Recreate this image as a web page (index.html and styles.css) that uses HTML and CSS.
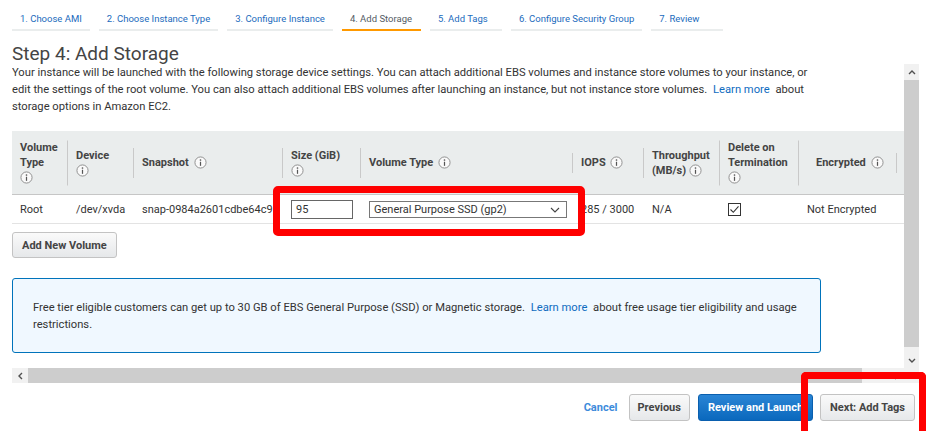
FILE: index.html
```html
<!DOCTYPE html>
<html lang="en">
<head>
  <meta charset="UTF-8">
  <title>Launch instance wizard - Add Storage</title>
  <link rel="stylesheet" href="styles.css">
</head>
<body>
  <ul class="tabs">
    <li><a href="#">1. Choose AMI</a></li>
    <li><a href="#">2. Choose Instance Type</a></li>
    <li><a href="#">3. Configure Instance</a></li>
    <li class="active"><a href="#">4. Add Storage</a></li>
    <li><a href="#">5. Add Tags</a></li>
    <li><a href="#">6. Configure Security Group</a></li>
    <li><a href="#">7. Review</a></li>
  </ul>

  <h1 class="title">Step 4: Add Storage</h1>

  <div class="frame">
    <div class="viewport">
      <p class="intro">Your instance will be launched with the following storage device settings. You can attach additional EBS volumes and instance store volumes to your instance, or edit the settings of the root volume. You can also attach additional EBS volumes after launching an instance, but not instance store volumes. <a href="#">Learn more</a> about storage options in Amazon EC2.</p>

      <table class="volumes">
        <colgroup>
          <col style="width:56px"><col style="width:66px"><col style="width:149px"><col style="width:78px"><col style="width:212px">
          <col style="width:71px"><col style="width:76px"><col style="width:79px"><col style="width:98px"><col style="width:40px">
        </colgroup>
        <thead>
          <tr>
            <th class="sep3">Volume<br>Type<br><svg class="info" viewBox="0 0 14 14"><circle cx="7" cy="7" r="6" fill="#fafafa" stroke="#8a8a8a"/><circle cx="7" cy="4.3" r="0.9" fill="#555"/><path d="M7 6.2v4.4" stroke="#555" stroke-width="1.3"/></svg></th>
            <th class="sep2">Device<br><svg class="info" viewBox="0 0 14 14"><circle cx="7" cy="7" r="6" fill="#fafafa" stroke="#8a8a8a"/><circle cx="7" cy="4.3" r="0.9" fill="#555"/><path d="M7 6.2v4.4" stroke="#555" stroke-width="1.3"/></svg></th>
            <th class="sep2">Snapshot <svg class="info" viewBox="0 0 14 14"><circle cx="7" cy="7" r="6" fill="#fafafa" stroke="#8a8a8a"/><circle cx="7" cy="4.3" r="0.9" fill="#555"/><path d="M7 6.2v4.4" stroke="#555" stroke-width="1.3"/></svg></th>
            <th class="sep2">Size (GiB)<br><svg class="info" viewBox="0 0 14 14"><circle cx="7" cy="7" r="6" fill="#fafafa" stroke="#8a8a8a"/><circle cx="7" cy="4.3" r="0.9" fill="#555"/><path d="M7 6.2v4.4" stroke="#555" stroke-width="1.3"/></svg></th>
            <th class="sep1">Volume Type <svg class="info" viewBox="0 0 14 14"><circle cx="7" cy="7" r="6" fill="#fafafa" stroke="#8a8a8a"/><circle cx="7" cy="4.3" r="0.9" fill="#555"/><path d="M7 6.2v4.4" stroke="#555" stroke-width="1.3"/></svg></th>
            <th class="sep2">IOPS <svg class="info" viewBox="0 0 14 14"><circle cx="7" cy="7" r="6" fill="#fafafa" stroke="#8a8a8a"/><circle cx="7" cy="4.3" r="0.9" fill="#555"/><path d="M7 6.2v4.4" stroke="#555" stroke-width="1.3"/></svg></th>
            <th class="sep3">Throughput<br>(MB/s) <svg class="info" viewBox="0 0 14 14"><circle cx="7" cy="7" r="6" fill="#fafafa" stroke="#8a8a8a"/><circle cx="7" cy="4.3" r="0.9" fill="#555"/><path d="M7 6.2v4.4" stroke="#555" stroke-width="1.3"/></svg></th>
            <th class="sep3">Delete on<br>Termination<br><svg class="info" viewBox="0 0 14 14"><circle cx="7" cy="7" r="6" fill="#fafafa" stroke="#8a8a8a"/><circle cx="7" cy="4.3" r="0.9" fill="#555"/><path d="M7 6.2v4.4" stroke="#555" stroke-width="1.3"/></svg></th>
            <th class="sep1 enc">Encrypted <svg class="info" viewBox="0 0 14 14"><circle cx="7" cy="7" r="6" fill="#fafafa" stroke="#8a8a8a"/><circle cx="7" cy="4.3" r="0.9" fill="#555"/><path d="M7 6.2v4.4" stroke="#555" stroke-width="1.3"/></svg></th>
            <th></th>
          </tr>
        </thead>
        <tbody>
          <tr>
            <td>Root</td>
            <td>/dev/xvda</td>
            <td>snap-0984a2601cdbe64c9</td>
            <td><span class="size-input">95</span></td>
            <td>
              <span class="type-select">General Purpose SSD (gp2)
                <svg class="caret" viewBox="0 0 10 6"><path d="M1 1l4 4 4-4" fill="none" stroke="#444" stroke-width="1.1"/></svg>
              </span>
            </td>
            <td>285 / 3000</td>
            <td>N/A</td>
            <td>
              <svg class="check" viewBox="0 0 13 13"><rect x="0.5" y="0.5" width="12" height="12" fill="#fff" stroke="#333"/><path d="M2.5 6.5l2.8 2.8 5.2-6" fill="none" stroke="#333" stroke-width="1.1"/></svg>
            </td>
            <td>Not Encrypted</td>
            <td></td>
          </tr>
        </tbody>
      </table>

      <button class="btn add-volume">Add New Volume</button>

      <div class="notice">
        Free tier eligible customers can get up to 30 GB of EBS General Purpose (SSD) or Magnetic storage. <a href="#">Learn more</a> about free usage tier eligibility and usage restrictions.
      </div>
    </div>

    <div class="vscroll">
      <div class="arrow"><svg viewBox="0 0 8 5"><path d="M1 4l3-3 3 3" fill="none" stroke="#505050" stroke-width="1.4"/></svg></div>
      <div class="thumb-v"></div>
      <div class="track"></div>
      <div class="arrow"><svg viewBox="0 0 8 5"><path d="M1 1l3 3 3-3" fill="none" stroke="#505050" stroke-width="1.4"/></svg></div>
    </div>

    <div class="hscroll">
      <div class="arrow"><svg viewBox="0 0 5 8"><path d="M4 1L1 4l3 3" fill="none" stroke="#505050" stroke-width="1.4"/></svg></div>
      <div class="thumb-h"></div>
      <div class="track"></div>
      <div class="arrow"><svg viewBox="0 0 5 8"><path d="M1 1l3 3-3 3" fill="none" stroke="#505050" stroke-width="1.4"/></svg></div>
    </div>
    <div class="corner"></div>
  </div>

  <div class="actions">
    <a href="#" class="cancel">Cancel</a>
    <button class="btn prev">Previous</button>
    <button class="btn primary">Review and Launch</button>
    <button class="btn">Next: Add Tags</button>
  </div>

  <div class="mark mark-table"></div>
  <div class="mark mark-next"></div>
</body>
</html>
```

FILE: styles.css
```css
html {
  overflow: hidden;
}
body {
  margin: 0;
  font-family: Roboto, "Liberation Sans", sans-serif;
  color: #333;
  background: #fff;
  position: relative;
  height: 431px;
  overflow: hidden;
}
a {
  color: #0f6cbf;
  text-decoration: none;
}

/* wizard steps */
.tabs {
  display: flex;
  gap: 9px;
  list-style: none;
  margin: 8px 0 0 12px;
  padding: 0;
}
.tabs li {
  box-sizing: border-box;
  min-width: 72px;
  padding: 5px 8px 4px;
  font-size: 9.5px;
  line-height: 12px;
  border-bottom: 2px solid #eaeded;
}
.tabs a {
  color: #1b6bbd;
}
.tabs .active {
  min-width: 79px;
  border-bottom-color: #ff9900;
}
.tabs .active a {
  color: #545b64;
}

.title {
  margin: 12px 0 0 12px;
  font-size: 19px;
  line-height: 21px;
  font-weight: 400;
  color: #444;
}

/* scroll frame */
.frame {
  display: grid;
  grid-template-columns: 892px 15px;
  grid-template-rows: 304px 15px;
  margin-left: 12px;
  width: 907px;
}
.viewport {
  overflow: hidden;
}
.intro {
  margin: 0;
  width: 800px;
  font-size: 11.2px;
  line-height: 17px;
  color: #333;
}
.intro a {
  margin: 0 3px;
}

.volumes {
  margin-top: 16px;
  border-collapse: collapse;
  table-layout: fixed;
  width: 925px;
  font-size: 11px;
}
.volumes th {
  position: relative;
  height: 63px;
  padding: 0 8px;
  background: #eaeded;
  border-bottom: 1px solid #c6c6c6;
  text-align: left;
  vertical-align: middle;
  font-weight: 700;
  line-height: 15px;
  color: #444;
  white-space: nowrap;
}
.volumes th::after {
  content: "";
  position: absolute;
  right: 0;
  top: 50%;
  width: 1px;
  background: #c9c9c9;
  transform: translateY(-50%);
}
.volumes th.sep1::after { height: 20px; }
.volumes th.sep2::after { height: 30px; }
.volumes th.sep3::after { height: 45px; }
.volumes th.enc {
  padding-left: 17px;
}
.info {
  width: 13px;
  height: 13px;
  vertical-align: -3px;
  margin-left: 2px;
}
.volumes th br + .info {
  margin-left: 0;
}
.volumes td {
  height: 28px;
  padding: 0 8px;
  border-bottom: 1px solid #e3e3e3;
  white-space: nowrap;
  color: #333;
}
.size-input {
  display: block;
  width: 56px;
  height: 17px;
  padding-left: 4px;
  border: 1px solid #666;
  line-height: 17px;
}
.type-select {
  display: flex;
  align-items: center;
  justify-content: space-between;
  width: 186px;
  height: 15px;
  padding: 0 6px 0 4px;
  border: 1px solid #777;
  margin-top: 1px;
  line-height: 15px;
}
.caret {
  width: 10px;
  height: 6px;
}
.check {
  display: block;
  width: 13px;
  height: 13px;
}

.btn {
  height: 27px;
  padding: 0 9px;
  border: 1px solid #c3c3c3;
  border-radius: 3px;
  background: linear-gradient(#fafafa, #e6e8ea);
  font-family: inherit;
  font-size: 11px;
  font-weight: 700;
  color: #444;
}
.add-volume {
  display: block;
  margin-top: 8px;
  height: 26px;
}

.notice {
  margin-top: 20px;
  width: 767px;
  padding: 20px 20px 19px;
  border: 1px solid #0073bb;
  border-radius: 3px;
  background: #f0f8ff;
  font-size: 11.2px;
  line-height: 17px;
  color: #333;
}
.notice a {
  margin: 0 3px;
}

.vscroll {
  display: flex;
  flex-direction: column;
  background: #f1f1f1;
}
.hscroll {
  display: flex;
  background: #f1f1f1;
}
.arrow {
  display: flex;
  align-items: center;
  justify-content: center;
  flex: 0 0 16px;
  background: #f1f1f1;
}
.vscroll .arrow svg {
  width: 8px;
  height: 5px;
}
.hscroll .arrow svg {
  width: 5px;
  height: 8px;
}
.thumb-v {
  flex: 0 0 267px;
  background: #cdcdcd;
}
.thumb-h {
  flex: 0 0 834px;
  background: #cdcdcd;
}
.track {
  flex: 1;
}
.corner {
  background: #f1f1f1;
}

.actions {
  display: flex;
  justify-content: flex-end;
  align-items: center;
  gap: 7px;
  margin-top: 11px;
  padding-right: 11px;
}
.cancel {
  margin-right: 4px;
  font-size: 11px;
  font-weight: 700;
  color: #3d8bdb;
}
.btn.prev {
  padding: 0 8px;
  margin-right: 1px;
}
.btn.primary {
  border-color: #0a5fae;
  background: linear-gradient(#2a85d5, #0a68bd);
  color: #fff;
}

/* red annotation boxes */
.mark {
  position: absolute;
  border: 7px solid #ff0000;
  border-radius: 5px;
}
.mark-table {
  left: 273px;
  top: 186px;
  width: 298px;
  height: 36px;
}
.mark-next {
  left: 801px;
  top: 372px;
  width: 111px;
  height: 52px;
  border-bottom: 0;
  border-radius: 5px 5px 0 0;
}
```
